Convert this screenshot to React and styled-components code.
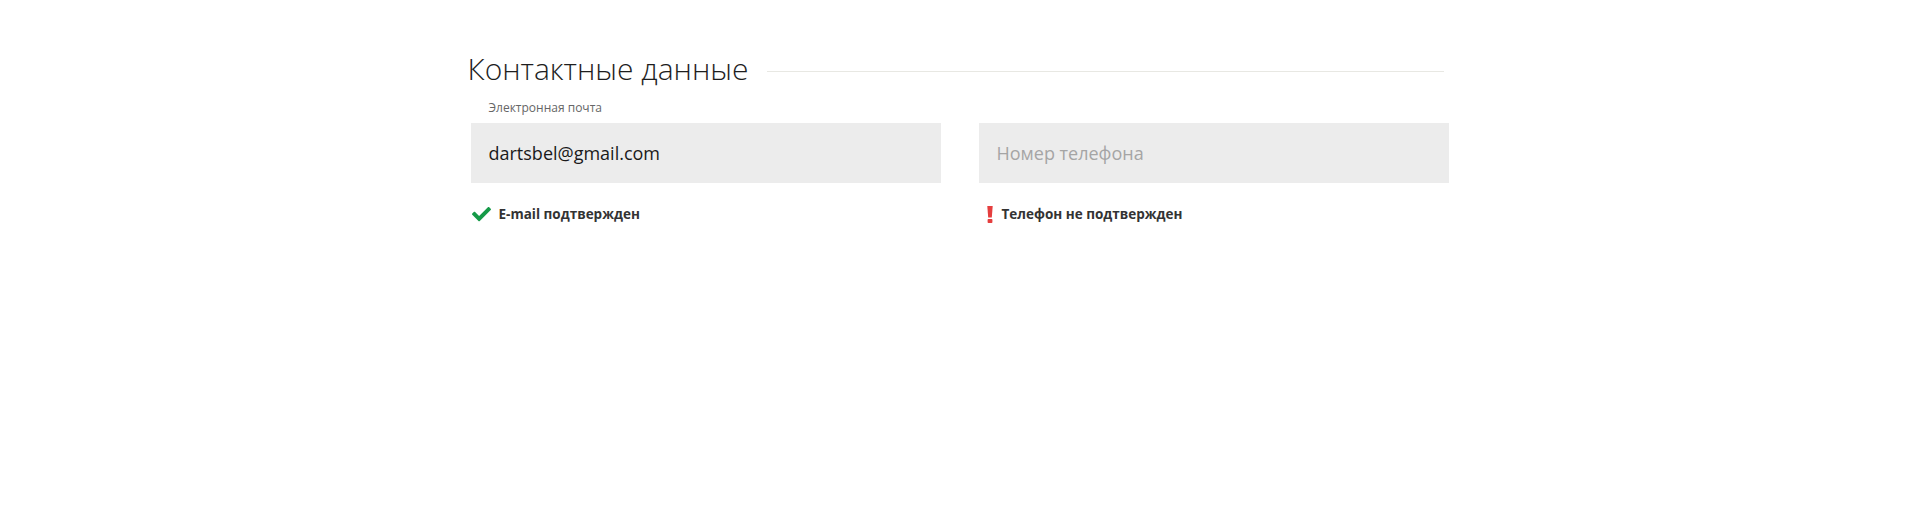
import styled, { createGlobalStyle } from 'styled-components';

const GlobalStyle = createGlobalStyle`
  html, body {
    margin: 0;
    padding: 0;
    background: #fff;
  }

  body {
    font-family: 'Open Sans', 'Liberation Sans', sans-serif;
    color: #222;
  }
`;

export default function App() {
  return (
    <>
      <GlobalStyle />
      <Page>
        <Section>
          <Heading>
            <Title>Контактные данные</Title>
            <Rule />
          </Heading>
          <Fields>
            <Field>
              <Label>Электронная почта</Label>
              <Input type='email' defaultValue='dartsbel@gmail.com' />
              <Status>
                <CheckIcon />
                E-mail подтвержден
              </Status>
            </Field>
            <Field>
              <Label />
              <Input type='tel' placeholder='Номер телефона' />
              <Status offset='8px' gap='9px'>
                <AlertIcon />
                Телефон не подтвержден
              </Status>
            </Field>
          </Fields>
        </Section>
      </Page>
    </>
  );
}

const CheckIcon = () => (
  <svg width='19' height='15' viewBox='0 0 512 400' fill='#159a48'>
    <path d='M173.9 375.4l-166.4-166.4c-10-10-10-26.2 0-36.2l40-40c10-10 26.2-10 36.2 0L192 240 428 4c10-10 26.2-10 36.2 0l40 40c10 10 10 26.2 0 36.2l-294.4 294.4c-10 10-26.2 10-36.2 0z' />
  </svg>
);

const AlertIcon = () => (
  <svg width='6' height='17' viewBox='0 0 6 17' fill='#e53e3e'>
    <path d='M0.3 0h5.4l-0.9 11.4h-3.6z' />
    <rect x='0.6' y='13' width='4.8' height='4' rx='0.8' />
  </svg>
);

const Page = styled.main`
  padding-top: 49px;
  display: flex;
  justify-content: center;
`;

const Section = styled.section`
  width: 980px;
  padding-left: 1px;
`;

const Heading = styled.div`
  display: flex;
  align-items: center;
  column-gap: 19px;
  padding-right: 7px;
`;

const Title = styled.h1`
  margin: 0 0 0 -3px;
  font-size: 30px;
  font-weight: 300;
  line-height: 40px;
  color: #1e1e1e;
  white-space: nowrap;
`;

const Rule = styled.div`
  flex: 1 1 0;
  height: 1px;
  margin-top: 4px;
  background-color: #e8e8e3;
`;

const Fields = styled.div`
  display: grid;
  grid-template-columns: 470px 470px;
  column-gap: 38px;
  margin-top: 11px;
`;

const Field = styled.div`
  display: grid;
  grid-template-rows: 23px 60px auto;
`;

const Label = styled.label`
  padding-left: 18px;
  font-size: 12px;
  line-height: 16px;
  color: #666;
`;

const Input = styled.input`
  box-sizing: border-box;
  width: 100%;
  height: 60px;
  padding: 0 18px;
  border: none;
  outline: none;
  background-color: #ececec;
  font-family: 'Open Sans', 'Liberation Sans', sans-serif;
  font-size: 18px;
  color: #1a1a1a;

  &::placeholder {
    color: #a5a5a5;
  }
`;

const Status = styled.div`
  display: flex;
  align-items: center;
  column-gap: ${p => p.gap || '8px'};
  margin-top: 22px;
  padding-left: ${p => p.offset || '1px'};
  font-size: 13.5px;
  font-weight: 700;
  line-height: 18px;
  color: #333;
`;
